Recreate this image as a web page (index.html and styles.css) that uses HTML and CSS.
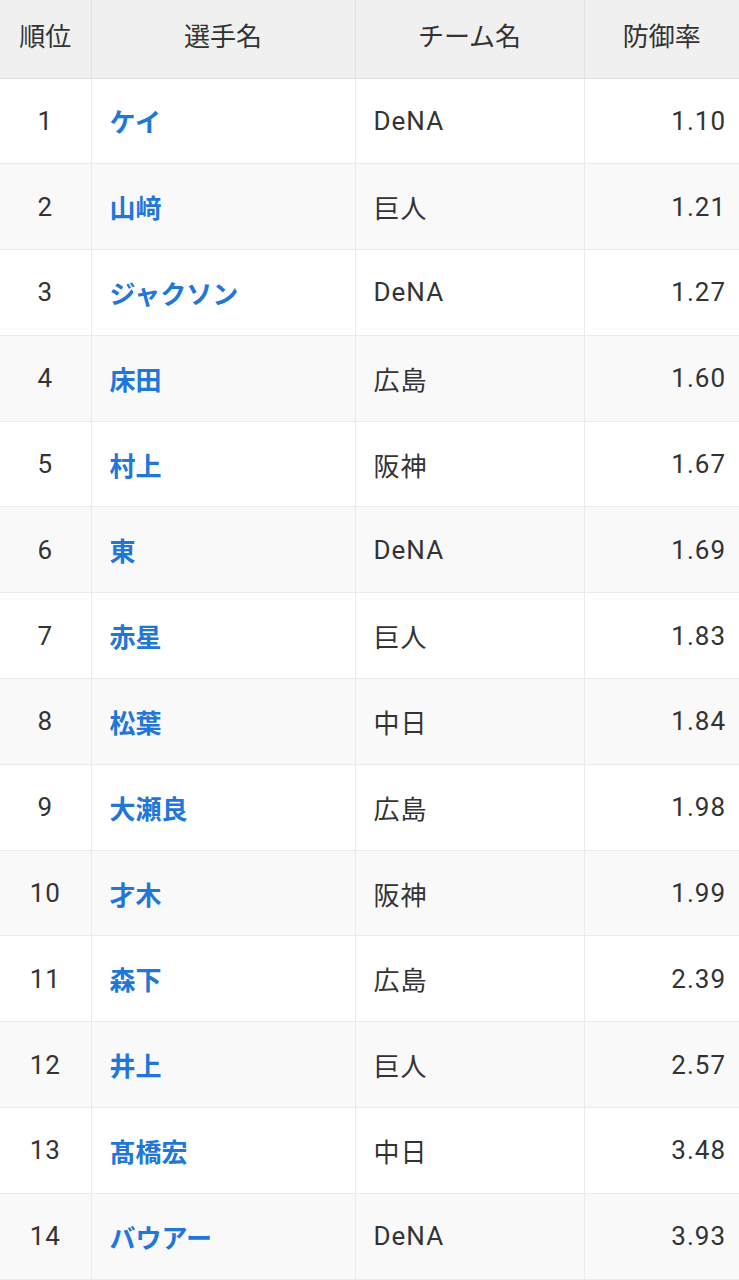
FILE: index.html
```html
<!DOCTYPE html>
<html lang="ja">
<head>
<meta charset="utf-8">
<link rel="stylesheet" href="styles.css">
</head>
<body>
<table class="rank">
  <colgroup>
    <col class="c-rank"><col class="c-name"><col class="c-team"><col class="c-era">
  </colgroup>
  <thead>
    <tr><th>順位</th><th>選手名</th><th>チーム名</th><th>防御率</th></tr>
  </thead>
  <tbody>
    <tr><td class="num">1</td><td class="name"><a>ケイ</a></td><td class="team">DeNA</td><td class="era">1.10</td></tr>
    <tr><td class="num">2</td><td class="name"><a>山﨑</a></td><td class="team">巨人</td><td class="era">1.21</td></tr>
    <tr><td class="num">3</td><td class="name"><a>ジャクソン</a></td><td class="team">DeNA</td><td class="era">1.27</td></tr>
    <tr><td class="num">4</td><td class="name"><a>床田</a></td><td class="team">広島</td><td class="era">1.60</td></tr>
    <tr><td class="num">5</td><td class="name"><a>村上</a></td><td class="team">阪神</td><td class="era">1.67</td></tr>
    <tr><td class="num">6</td><td class="name"><a>東</a></td><td class="team">DeNA</td><td class="era">1.69</td></tr>
    <tr><td class="num">7</td><td class="name"><a>赤星</a></td><td class="team">巨人</td><td class="era">1.83</td></tr>
    <tr><td class="num">8</td><td class="name"><a>松葉</a></td><td class="team">中日</td><td class="era">1.84</td></tr>
    <tr><td class="num">9</td><td class="name"><a>大瀬良</a></td><td class="team">広島</td><td class="era">1.98</td></tr>
    <tr><td class="num">10</td><td class="name"><a>才木</a></td><td class="team">阪神</td><td class="era">1.99</td></tr>
    <tr><td class="num">11</td><td class="name"><a>森下</a></td><td class="team">広島</td><td class="era">2.39</td></tr>
    <tr><td class="num">12</td><td class="name"><a>井上</a></td><td class="team">巨人</td><td class="era">2.57</td></tr>
    <tr><td class="num">13</td><td class="name"><a>髙橋宏</a></td><td class="team">中日</td><td class="era">3.48</td></tr>
    <tr><td class="num">14</td><td class="name"><a>バウアー</a></td><td class="team">DeNA</td><td class="era">3.93</td></tr>
  </tbody>
</table>
</body>
</html>
```

FILE: styles.css
```css
html, body {
  margin: 0;
  padding: 0;
  background: #ffffff;
}
body {
  font-family: Roboto, "Noto Sans CJK JP", sans-serif;
  color: #333333;
}
.rank {
  width: 739px;
  border-collapse: collapse;
  table-layout: fixed;
}
.c-rank { width: 91px; }
.c-name { width: 264px; }
.c-team { width: 229px; }
.c-era { width: 155px; }

.rank th {
  height: 78px;
  padding: 0 0 9px 0;
  background: #f0f0f0;
  font-weight: 400;
  font-size: 26px;
  color: #333333;
  text-align: center;
  vertical-align: middle;
  border-bottom: 1px solid #dcdcdc;
  border-left: 1px solid #e2e2e2;
  box-sizing: border-box;
}
.rank th:first-child { border-left: none; }

.rank td {
  height: 85.8px;
  padding: 0;
  font-size: 26px;
  letter-spacing: 1px;
  vertical-align: middle;
  border-bottom: 1px solid #ebebeb;
  border-left: 1px solid #ebebeb;
  box-sizing: border-box;
}
.rank td:first-child { border-left: none; }
.rank tbody tr:nth-child(even) td { background: #f9f9f9; }

.num { text-align: center; }
.name { padding-left: 18px !important; letter-spacing: 0 !important; }
.name a {
  color: #2176d9;
  font-weight: 700;
  text-decoration: none;
}
.team { padding-left: 18px !important; }
.era {
  text-align: right;
  padding-right: 13px !important;
}
```
